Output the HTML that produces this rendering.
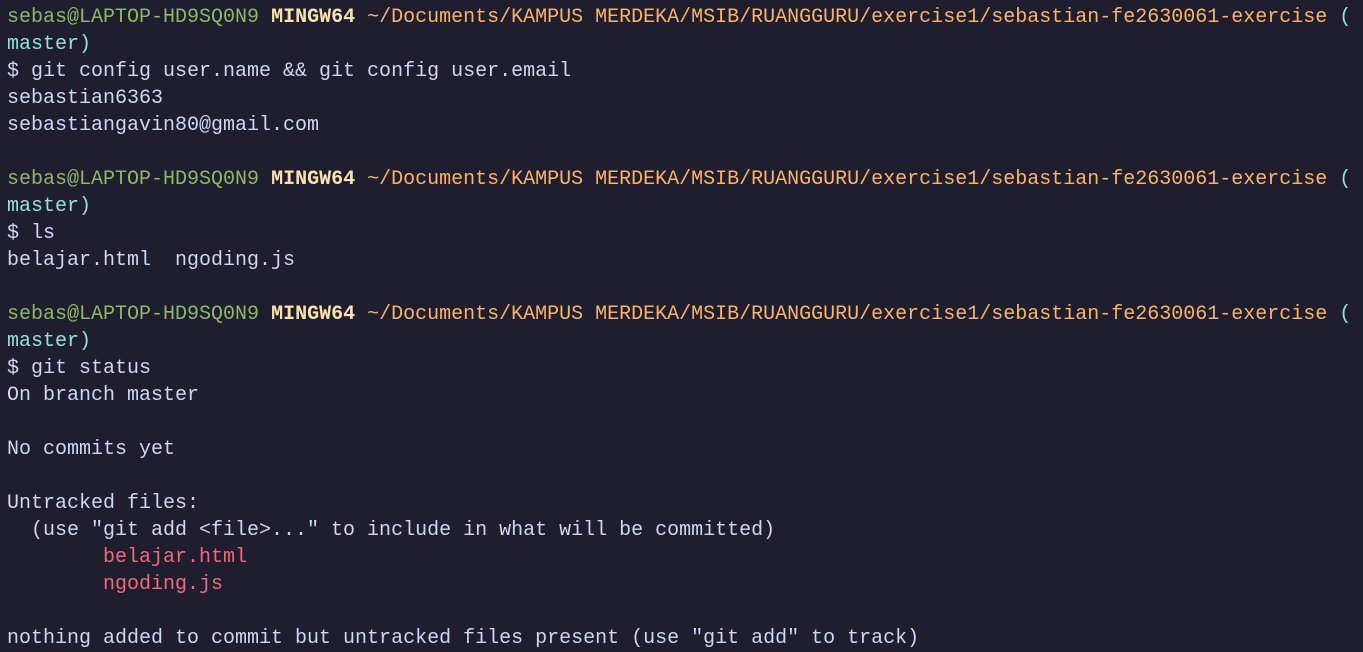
<!DOCTYPE html>
<html><head><style>
html,body{margin:0;padding:0;background:#1e1e2e;width:1363px;height:652px;overflow:hidden}
pre{margin:0;padding:4px 0 0 7px;font-family:"Liberation Mono",monospace;font-size:20px;line-height:27px;color:#cdd6f4;white-space:pre}
.g{color:#8db86a}.y{color:#f9e2af;font-weight:bold}.o{color:#fab36a}.t{color:#94e2d5}.r{color:#f0697d}
</style></head><body><pre><span class="g">sebas@LAPTOP-HD9SQ0N9</span> <span class="y">MINGW64</span> <span class="o">~/Documents/KAMPUS MERDEKA/MSIB/RUANGGURU/exercise1/sebastian-fe2630061-exercise</span> <span class="t">(</span>
<span class="t">master)</span>
$ git config user.name &amp;&amp; git config user.email
sebastian6363
sebastiangavin80@gmail.com

<span class="g">sebas@LAPTOP-HD9SQ0N9</span> <span class="y">MINGW64</span> <span class="o">~/Documents/KAMPUS MERDEKA/MSIB/RUANGGURU/exercise1/sebastian-fe2630061-exercise</span> <span class="t">(</span>
<span class="t">master)</span>
$ ls
belajar.html  ngoding.js

<span class="g">sebas@LAPTOP-HD9SQ0N9</span> <span class="y">MINGW64</span> <span class="o">~/Documents/KAMPUS MERDEKA/MSIB/RUANGGURU/exercise1/sebastian-fe2630061-exercise</span> <span class="t">(</span>
<span class="t">master)</span>
$ git status
On branch master

No commits yet

Untracked files:
  (use "git add &lt;file&gt;..." to include in what will be committed)
        <span class="r">belajar.html</span>
        <span class="r">ngoding.js</span>

nothing added to commit but untracked files present (use "git add" to track)
</pre></body></html>
